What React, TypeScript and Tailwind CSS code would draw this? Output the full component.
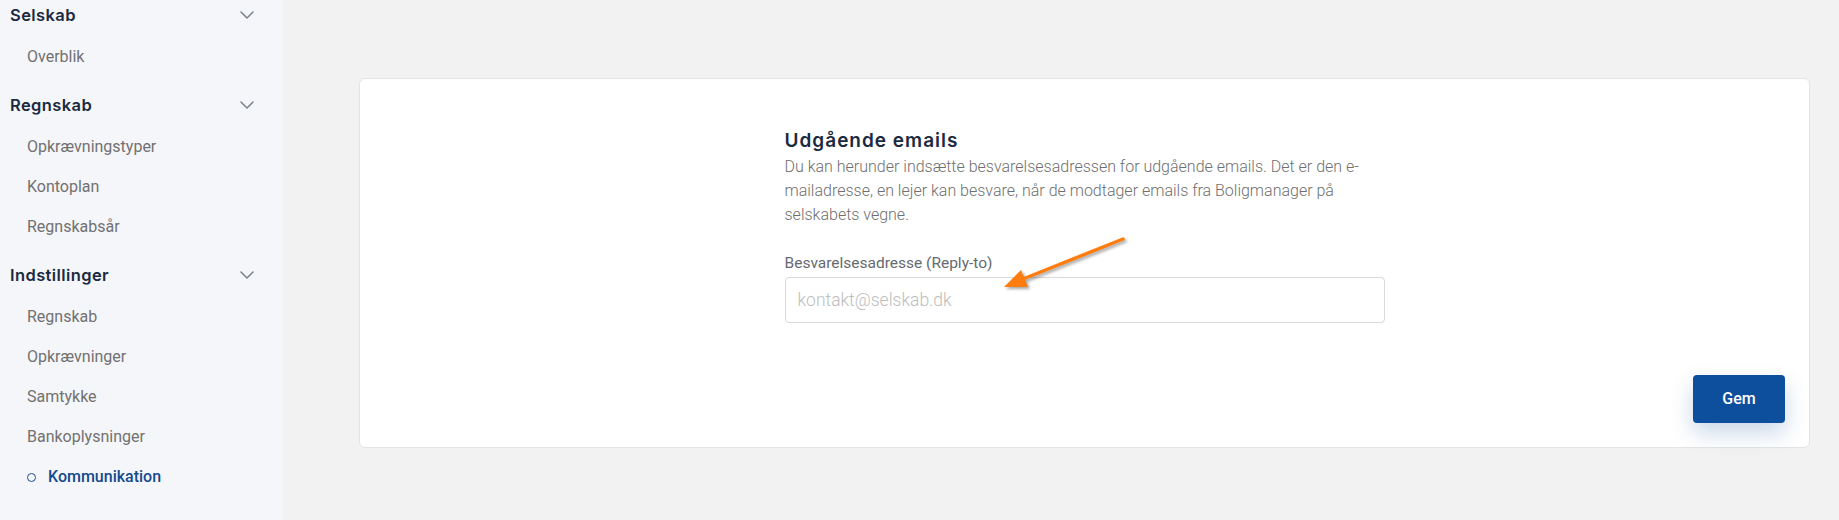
import React from 'react'

const groups = [
  { title: 'Selskab', items: ['Overblik'] },
  { title: 'Regnskab', items: ['Opkrævningstyper', 'Kontoplan', 'Regnskabsår'] },
  {
    title: 'Indstillinger',
    items: ['Regnskab', 'Opkrævninger', 'Samtykke', 'Bankoplysninger', 'Kommunikation'],
  },
]

const active = 'Kommunikation'

function Chevron() {
  return (
    <svg width="14" height="8" viewBox="0 0 14 8" fill="none">
      <path d="M1 1l6 6 6-6" stroke="#7b808a" strokeWidth="1.5" strokeLinecap="round" strokeLinejoin="round" />
    </svg>
  )
}

function Sidebar() {
  return (
    <aside className="w-[283px] shrink-0 bg-[#f5f6fa]">
      {groups.map((g) => (
        <div key={g.title} className="pb-[13px]">
          <div className="flex h-[30px] items-center justify-between pl-[10px] pr-[29px]">
            <span className="font-['Inter',sans-serif] text-[16.5px] font-semibold tracking-[0.4px] text-[#1b2a41]">
              {g.title}
            </span>
            <Chevron />
          </div>
          <ul className="pt-[7px]">
            {g.items.map((it) => {
              const isActive = it === active
              return (
                <li key={it} className="flex h-10 items-center pl-[27px]">
                  {isActive ? (
                    <>
                      <span className="mr-[12px] h-[9px] w-[9px] rounded-full border-[1.5px] border-[#1d4f91]" />
                      <span className="font-['Roboto',sans-serif] text-[16px] font-medium text-[#154a8c]">
                        {it}
                      </span>
                    </>
                  ) : (
                    <span className="font-['Roboto',sans-serif] text-[16px] text-[#717171]">{it}</span>
                  )}
                </li>
              )
            })}
          </ul>
        </div>
      ))}
    </aside>
  )
}

function Arrow() {
  return (
    <svg
      className="pointer-events-none absolute left-[630px] top-[150px]"
      width="150"
      height="75"
      viewBox="0 0 150 75"
      style={{ filter: 'drop-shadow(2px 2px 1.5px rgba(0,0,0,0.35))' }}
    >
      <line x1="133" y1="10" x2="33" y2="50" stroke="#ff7d0f" strokeWidth="3.5" strokeLinecap="round" />
      <polygon points="14,58 38,58 31,41" fill="#ff7d0f" />
    </svg>
  )
}

export default function App() {
  return (
    <div className="flex h-[520px] w-full overflow-hidden">
      <Sidebar />
      <main className="flex-1 bg-[#f2f2f2] pl-[76px] pr-[29px] pt-[78px]">
        <div className="relative flex h-[370px] flex-col rounded-md border border-[#e4e4e4] bg-white">
          <div className="mx-auto w-[600px] pt-[50px]">
            <h2 className="mb-[2px] font-['Inter',sans-serif] text-[19px] font-semibold leading-6 tracking-[1px] text-[#1b2a41]">
              Udgående emails
            </h2>
            <p className="font-['Roboto',sans-serif] text-[16px] font-light leading-6 text-[#6f6f6f]">
              Du kan herunder indsætte besvarelsesadressen for udgående emails. Det er den e-mailadresse, en lejer
              kan besvare, når de modtager emails fra Boligmanager på selskabets vegne.
            </p>
            <label className="mt-[26px] block font-['Roboto',sans-serif] text-[15.5px] leading-5 text-[#666a70]">
              Besvarelsesadresse (Reply-to)
            </label>
            <input
              type="text"
              placeholder="kontakt@selskab.dk"
              className="mt-[4px] h-[46px] w-full rounded border border-[#d9d9d9] px-3 font-['Roboto',sans-serif] text-[17.5px] font-light text-[#333] outline-none placeholder:text-[#bdbdbd]"
            />
          </div>
          <div className="mt-auto flex justify-end p-6">
            <button className="h-12 w-[92px] rounded bg-[#0d4f9c] font-['Roboto',sans-serif] text-[16px] font-medium text-white shadow-[0_10px_22px_rgba(13,79,156,0.22)]">
              Gem
            </button>
          </div>
          <Arrow />
        </div>
      </main>
    </div>
  )
}
